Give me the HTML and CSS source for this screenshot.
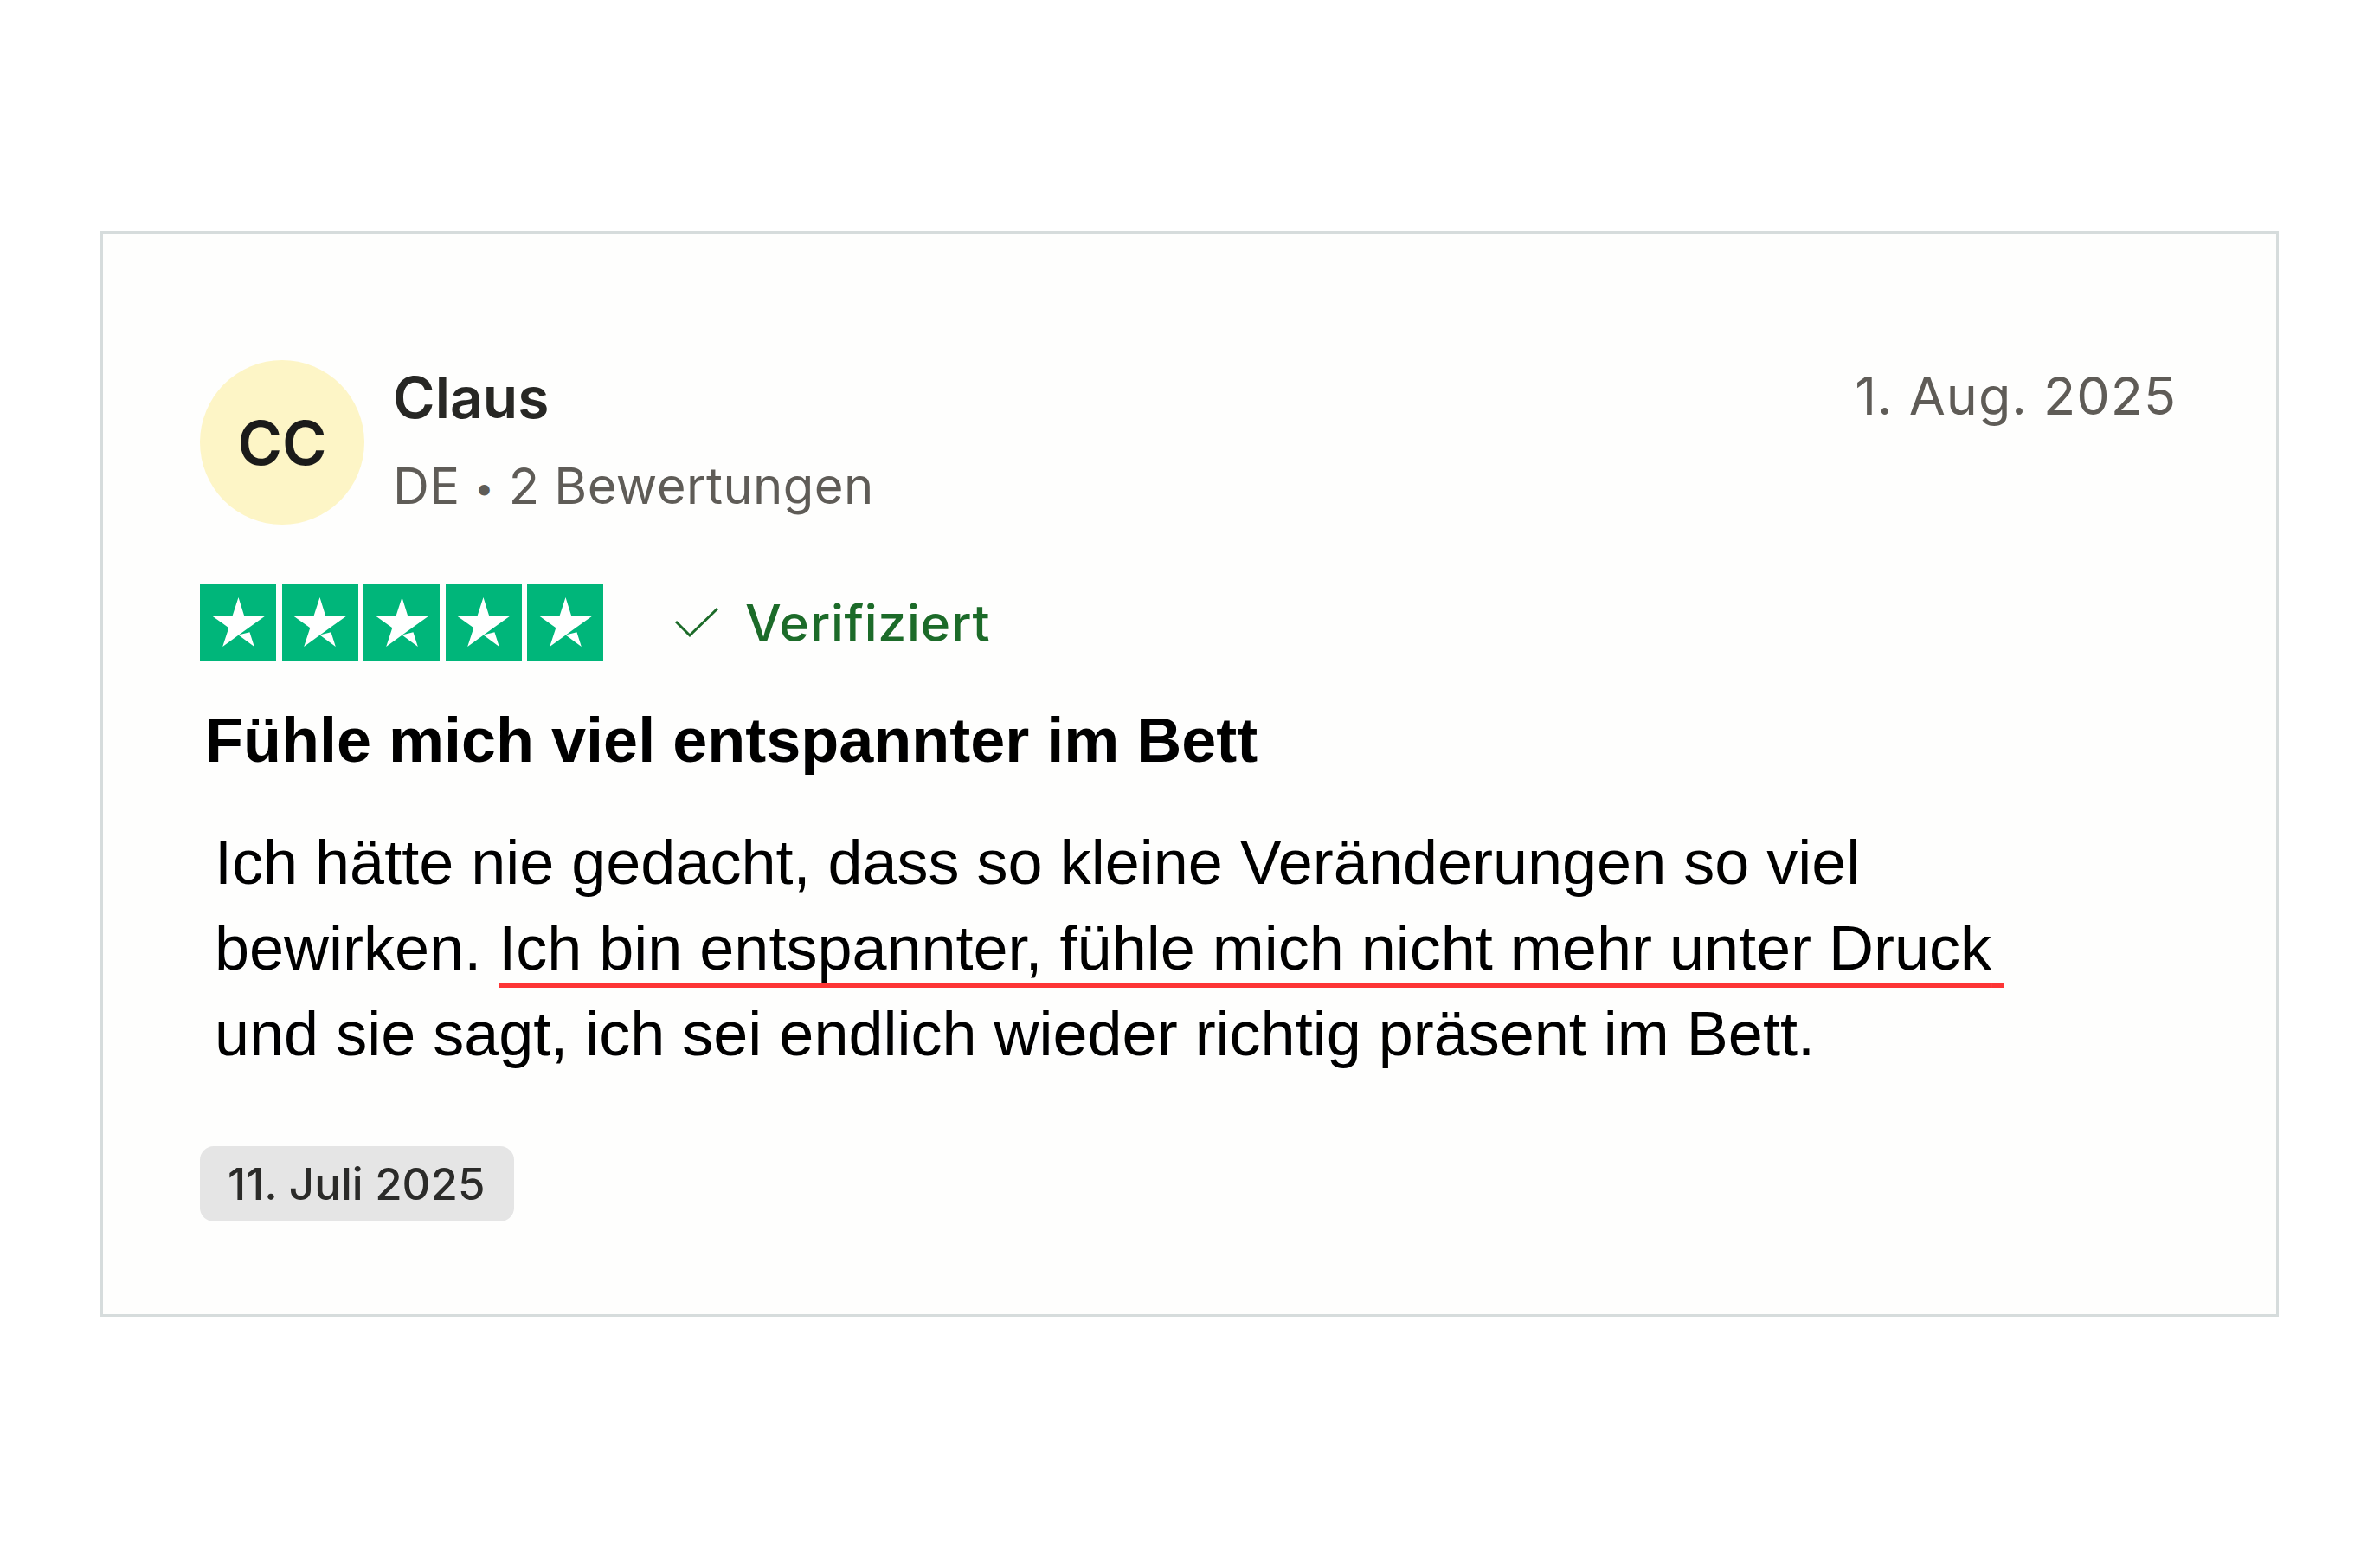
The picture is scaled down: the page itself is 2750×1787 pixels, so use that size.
FILE: index.html
```html
<!DOCTYPE html>
<html lang="de">
<head>
<meta charset="utf-8">
<title>Bewertung</title>
<link rel="stylesheet" href="styles.css">
</head>
<body>
<div class="card">
  <div class="header">
    <div class="avatar">CC</div>
    <div class="who">
      <div class="name">Claus</div>
      <div class="meta">DE <span class="dot">•</span> 2 Bewertungen</div>
    </div>
    <div class="date">1. Aug. 2025</div>
  </div>
  <div class="rating">
    <div class="stars">
      <span class="star"><svg viewBox="0 0 24 24"><path fill="#fff" d="M12 17.5l5.1-1.3 2.1 6.6-7.2-5.3zm11.7-8.5h-9L12 .4 9.2 9H.3l7.3 5.3-2.8 8.5 7.3-5.3 4.5-3.2 7.3-5.3z"/></svg></span>
      <span class="star"><svg viewBox="0 0 24 24"><path fill="#fff" d="M12 17.5l5.1-1.3 2.1 6.6-7.2-5.3zm11.7-8.5h-9L12 .4 9.2 9H.3l7.3 5.3-2.8 8.5 7.3-5.3 4.5-3.2 7.3-5.3z"/></svg></span>
      <span class="star"><svg viewBox="0 0 24 24"><path fill="#fff" d="M12 17.5l5.1-1.3 2.1 6.6-7.2-5.3zm11.7-8.5h-9L12 .4 9.2 9H.3l7.3 5.3-2.8 8.5 7.3-5.3 4.5-3.2 7.3-5.3z"/></svg></span>
      <span class="star"><svg viewBox="0 0 24 24"><path fill="#fff" d="M12 17.5l5.1-1.3 2.1 6.6-7.2-5.3zm11.7-8.5h-9L12 .4 9.2 9H.3l7.3 5.3-2.8 8.5 7.3-5.3 4.5-3.2 7.3-5.3z"/></svg></span>
      <span class="star"><svg viewBox="0 0 24 24"><path fill="#fff" d="M12 17.5l5.1-1.3 2.1 6.6-7.2-5.3zm11.7-8.5h-9L12 .4 9.2 9H.3l7.3 5.3-2.8 8.5 7.3-5.3 4.5-3.2 7.3-5.3z"/></svg></span>
    </div>
    <div class="verified">
      <svg class="check" viewBox="0 0 52 36"><polyline points="2,17 18,33 50,2" fill="none" stroke="#1c6b29" stroke-width="3"/></svg>
      <span>Verifiziert</span>
    </div>
  </div>
  <h2 class="title">Fühle mich viel entspannter im Bett</h2>
  <p class="body">Ich hätte nie gedacht, dass so kleine Veränderungen so viel bewirken. <span class="mark">Ich bin entspannter, fühle mich nicht mehr unter Druck</span> und sie sagt, ich sei endlich wieder richtig präsent im Bett.</p>
  <div class="pill">11. Juli 2025</div>
</div>
</body>
</html>
```

FILE: styles.css
```css
* { box-sizing: border-box; }
html, body { margin: 0; padding: 0; background: #ffffff; }
body { font-family: Inter, "Liberation Sans", sans-serif; }

.card {
  margin: 267px 0 0 116px;
  width: 2517px;
  border: 3px solid #d6dcdc;
  background: #fefefd;
  padding: 146px 115px 107px 112px;
}

.header { display: flex; align-items: flex-start; }
.avatar {
  flex: none;
  width: 190px;
  height: 190px;
  border-radius: 50%;
  background: #fdf5c6;
  display: flex;
  align-items: center;
  justify-content: center;
  font-size: 70px;
  font-weight: 600;
  color: #1b1b1a;
}
.who { flex: 1; margin-left: 33px; padding-top: 3px; }
.name { font-size: 66px; line-height: 80px; font-weight: 600; color: #272724; }
.meta { margin-top: 27px; font-size: 58px; line-height: 70px; letter-spacing: 0.4px; color: #5f5c57; }
.dot { font-size: 40px; vertical-align: 4px; }
.date { margin-top: 1px; font-size: 61px; line-height: 80px; letter-spacing: 1px; color: #5f5c57; }

.rating { display: flex; align-items: center; height: 88px; margin-top: 69px; }
.stars { display: flex; gap: 6.5px; }
.star {
  width: 88px;
  height: 88px;
  background: #00b67a;
  display: flex;
  align-items: center;
  justify-content: center;
}
.star svg { width: 61px; height: 61px; display: block; }
.verified { display: flex; align-items: center; margin-left: 82px; font-size: 59px; font-weight: 500; letter-spacing: 0.7px; color: #1c6b29; }
.check { width: 52px; height: 36px; margin-right: 30px; }

.title {
  margin: 50px 0 0;
  padding-left: 6px;
  font-family: "Liberation Sans", Arial, sans-serif;
  font-weight: 700;
  font-size: 72px;
  line-height: 84px;
  color: #000;
}
.body {
  margin: 50px 0 0;
  padding: 0 118px 0 17px;
  font-family: "Liberation Sans", Arial, sans-serif;
  font-size: 72px;
  line-height: 99px;
  color: #000;
}
.mark {
  text-decoration-line: underline;
  text-decoration-color: #fd3535;
  text-decoration-thickness: 5px;
  text-underline-offset: 16px;
  text-decoration-skip-ink: none;
}
.mark::after { content: "\2009"; }

.pill {
  display: flex;
  align-items: center;
  width: max-content;
  height: 87px;
  margin-top: 80px;
  padding: 0 34px 0 32px;
  background: #e5e5e5;
  border-radius: 16px;
  font-size: 51px;
  font-weight: 500;
  color: #2b2b29;
}
```
